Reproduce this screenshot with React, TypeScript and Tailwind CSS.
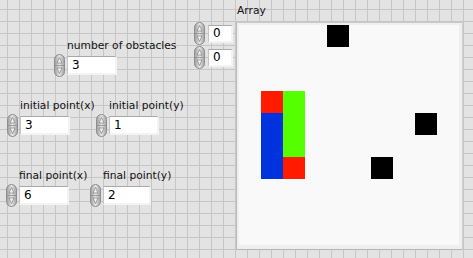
import React from 'react';

const cells: Record<string, string> = {
  '0-4': 'bg-black',
  '3-1': 'bg-[#ff1a00]',
  '3-2': 'bg-[#55ff00]',
  '4-2': 'bg-[#55ff00]',
  '5-2': 'bg-[#55ff00]',
  '4-1': 'bg-[#0033dd]',
  '5-1': 'bg-[#0033dd]',
  '6-1': 'bg-[#0033dd]',
  '6-2': 'bg-[#ff1a00]',
  '4-8': 'bg-black',
  '6-6': 'bg-black',
};

function Spinner() {
  return (
    <svg width="11" height="23" viewBox="0 0 11 23" className="shrink-0">
      <defs>
        <linearGradient id="spin" x1="0" x2="1" y1="0" y2="0">
          <stop offset="0" stopColor="#9a9a9a" />
          <stop offset="0.5" stopColor="#e6e6e6" />
          <stop offset="1" stopColor="#a0a0a0" />
        </linearGradient>
      </defs>
      <rect x="0.5" y="0.5" width="10" height="22" rx="5" fill="url(#spin)" stroke="#8e8e8e" />
      <line x1="1" x2="10" y1="11.5" y2="11.5" stroke="#8e8e8e" strokeWidth="0.8" />
      <path d="M5.5 3.5 L8 9 L3 9 Z" fill="#f2f2f2" stroke="#6f6f6f" strokeWidth="0.6" />
      <path d="M5.5 19.5 L8 14 L3 14 Z" fill="#f2f2f2" stroke="#6f6f6f" strokeWidth="0.6" />
    </svg>
  );
}

function NumBox({ value, w = 'w-[50px]', h = 'h-[19px]' }: { value: string; w?: string; h?: string }) {
  return (
    <div
      className={`${w} ${h} flex items-center border-t border-l border-t-[#a9a9a9] border-l-[#c4c4c4] border-r-2 border-b-2 border-r-[#f3f3f3] border-b-[#f3f3f3] bg-white pl-[4px] text-[12px] text-black`}
    >
      {value}
    </div>
  );
}

function Control({
  label,
  value,
  className,
  w,
}: {
  label: string;
  value: string;
  className: string;
  w?: string;
}) {
  return (
    <div className={`absolute flex flex-col ${className}`}>
      <div className="pl-[13px] text-[10.7px] leading-[14px] text-[#111] whitespace-nowrap">{label}</div>
      <div className="mt-[1px] flex items-center gap-[2px]">
        <Spinner />
        <NumBox value={value} w={w} />
      </div>
    </div>
  );
}

export default function App() {
  return (
    <div
      className="relative h-[258px] w-[473px] overflow-hidden bg-[#e3e3e3] bg-[linear-gradient(to_right,#c6c6c6_1px,transparent_1px),linear-gradient(to_bottom,#c6c6c6_1px,transparent_1px)] bg-[size:12px_12px] bg-[position:7px_9px] font-['DejaVu_Sans',sans-serif]"
    >
      {/* scalar controls */}
      <Control label="number of obstacles" value="3" className="left-[54px] top-[39px]" />
      <Control label="initial point(x)" value="3" className="left-[7px] top-[99px]" />
      <Control label="initial point(y)" value="1" className="left-[96px] top-[99px]" />
      <Control label="final point(x)" value="6" className="left-[6px] top-[169px]" />
      <Control label="final point(y)" value="2" className="left-[90px] top-[169px]" w="w-[48px]" />

      {/* array index */}
      <div className="absolute left-[194px] top-[22px] flex flex-col gap-[1px]">
        {['0', '0'].map((v, i) => (
          <div key={i} className="flex items-center gap-[3px]">
            <Spinner />
            <NumBox value={v} w="w-[25px]" h="h-[18px]" />
          </div>
        ))}
      </div>

      {/* array */}
      <div className="absolute left-[236px] top-[4px] flex flex-col">
        <div className="pl-[1px] text-[10.7px] leading-[14px] text-[#111]">Array</div>
        <div className="mt-[4px] border border-t-[#c9c9c9] border-l-[#bcbcbc] border-r-[#d0d0d0] border-b-[#b5b5b5] bg-[#efefef] pt-[2px] pl-[2px] pr-[3px] pb-[4px]">
          <div className="grid h-[220px] w-[220px] grid-cols-10 grid-rows-10 bg-[#f9f9f9]">
            {Array.from({ length: 100 }).map((_, i) => {
              const key = `${Math.floor(i / 10)}-${i % 10}`;
              return <div key={key} className={cells[key] ?? ''} />;
            })}
          </div>
        </div>
      </div>
    </div>
  );
}
